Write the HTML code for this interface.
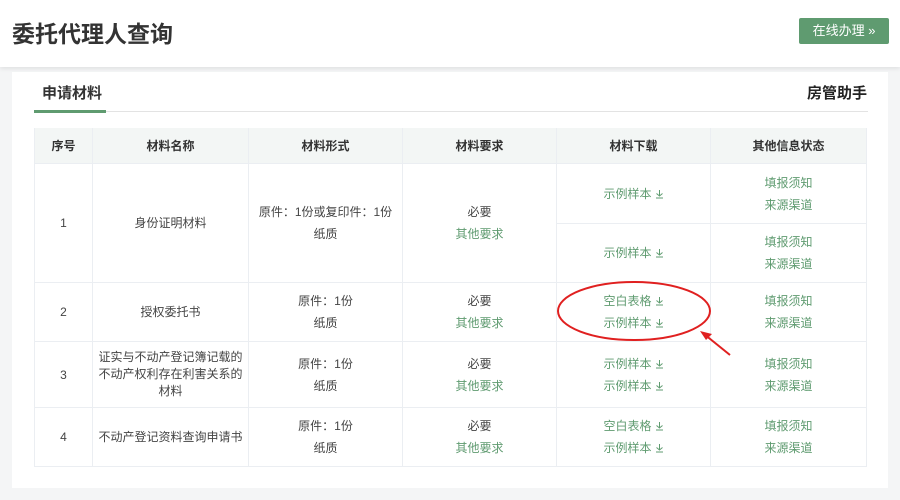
<!DOCTYPE html>
<html><head><meta charset="utf-8"><style>
*{margin:0;padding:0;box-sizing:border-box}
body{width:900px;height:500px;overflow:hidden;background:#f4f5f6;font-family:"Liberation Sans","Noto Sans CJK SC",sans-serif;position:relative;color:#333}
.hdr{position:absolute;left:0;top:0;width:900px;height:67px;background:#fff;box-shadow:0 2px 4px rgba(0,0,0,.08)}
.hdr h1{position:absolute;left:12px;top:15px;font-size:23px;font-weight:bold;color:#333}
.btn{position:absolute;left:799px;top:18px;width:90px;height:26px;background:#5f9b70;color:#fff;font-size:13px;line-height:26px;text-align:center;border-radius:2px}
.card{position:absolute;left:12px;top:72px;width:876px;height:416px;background:#fff}
.tab{position:absolute;left:42px;top:82px;font-size:15px;font-weight:bold;color:#333}
.tab2{position:absolute;left:807px;top:82px;font-size:15px;font-weight:bold;color:#222}
.line{position:absolute;left:34px;top:111px;width:834px;height:1px;background:#e3e3e3}
.uline{position:absolute;left:34px;top:110px;width:72px;height:3px;background:#5f9b70}
.c{position:absolute;border-right:1px solid #ebeef2;border-bottom:1px solid #ebeef2;display:flex;flex-direction:column;justify-content:center;align-items:center;text-align:center;font-size:12px;line-height:22px;color:#444}
.h{background:#f3f6f5;font-weight:bold;color:#333}
.g{color:#5f9b70}
.tbl{position:absolute;left:34px;top:128px;width:833px;height:339px;border-left:1px solid #ebeef2;border-top:1px solid #ebeef2}
.d{display:inline-block;width:9px;height:10px;margin-left:3px;vertical-align:-1px}
</style></head><body>
<svg width="0" height="0" style="position:absolute"><symbol id="dl" viewBox="0 0 9 10"><path d="M4.5 1v6M1.5 4.5l3 2.5 3-2.5M1 9h7" fill="none" stroke="#5f9b70" stroke-width="1"/></symbol></svg>
<div class="hdr"><h1>委托代理人查询</h1><div class="btn">在线办理 »</div></div>
<div class="card"></div>
<div class="tab">申请材料</div><div class="tab2">房管助手</div>
<div class="line"></div><div class="uline"></div>
<div class="tbl"></div>
<div class="c h" style="left:35px;top:128px;width:58px;height:36px">序号</div>
<div class="c h" style="left:93px;top:128px;width:156px;height:36px">材料名称</div>
<div class="c h" style="left:249px;top:128px;width:154px;height:36px">材料形式</div>
<div class="c h" style="left:403px;top:128px;width:154px;height:36px">材料要求</div>
<div class="c h" style="left:557px;top:128px;width:154px;height:36px">材料下载</div>
<div class="c h" style="left:711px;top:128px;width:156px;height:36px">其他信息状态</div>
<div class="c" style="left:35px;top:164px;width:58px;height:119px">1</div>
<div class="c" style="left:93px;top:164px;width:156px;height:119px">身份证明材料</div>
<div class="c" style="left:249px;top:164px;width:154px;height:119px"><div>原件：1份或复印件：1份</div><div>纸质</div></div>
<div class="c" style="left:403px;top:164px;width:154px;height:119px"><div>必要</div><div class="g">其他要求</div></div>
<div class="c g" style="left:557px;top:164px;width:154px;height:60px"><div>示例样本<svg class="d"><use href="#dl"/></svg></div></div>
<div class="c g" style="left:711px;top:164px;width:156px;height:60px"><div>填报须知</div><div>来源渠道</div></div>
<div class="c g" style="left:557px;top:224px;width:154px;height:59px"><div>示例样本<svg class="d"><use href="#dl"/></svg></div></div>
<div class="c g" style="left:711px;top:224px;width:156px;height:59px"><div>填报须知</div><div>来源渠道</div></div>
<div class="c" style="left:35px;top:283px;width:58px;height:59px">2</div>
<div class="c" style="left:93px;top:283px;width:156px;height:59px">授权委托书</div>
<div class="c" style="left:249px;top:283px;width:154px;height:59px"><div>原件：1份</div><div>纸质</div></div>
<div class="c" style="left:403px;top:283px;width:154px;height:59px"><div>必要</div><div class="g">其他要求</div></div>
<div class="c g" style="left:557px;top:283px;width:154px;height:59px"><div>空白表格<svg class="d"><use href="#dl"/></svg></div><div>示例样本<svg class="d"><use href="#dl"/></svg></div></div>
<div class="c g" style="left:711px;top:283px;width:156px;height:59px"><div>填报须知</div><div>来源渠道</div></div>
<div class="c" style="left:35px;top:342px;width:58px;height:66px">3</div>
<div class="c" style="left:93px;top:342px;width:156px;height:66px;line-height:17px">证实与不动产登记簿记载的<br>不动产权利存在利害关系的<br>材料</div>
<div class="c" style="left:249px;top:342px;width:154px;height:66px"><div>原件：1份</div><div>纸质</div></div>
<div class="c" style="left:403px;top:342px;width:154px;height:66px"><div>必要</div><div class="g">其他要求</div></div>
<div class="c g" style="left:557px;top:342px;width:154px;height:66px"><div>示例样本<svg class="d"><use href="#dl"/></svg></div><div>示例样本<svg class="d"><use href="#dl"/></svg></div></div>
<div class="c g" style="left:711px;top:342px;width:156px;height:66px"><div>填报须知</div><div>来源渠道</div></div>
<div class="c" style="left:35px;top:408px;width:58px;height:59px">4</div>
<div class="c" style="left:93px;top:408px;width:156px;height:59px">不动产登记资料查询申请书</div>
<div class="c" style="left:249px;top:408px;width:154px;height:59px"><div>原件：1份</div><div>纸质</div></div>
<div class="c" style="left:403px;top:408px;width:154px;height:59px"><div>必要</div><div class="g">其他要求</div></div>
<div class="c g" style="left:557px;top:408px;width:154px;height:59px"><div>空白表格<svg class="d"><use href="#dl"/></svg></div><div>示例样本<svg class="d"><use href="#dl"/></svg></div></div>
<div class="c g" style="left:711px;top:408px;width:156px;height:59px"><div>填报须知</div><div>来源渠道</div></div>
<svg style="position:absolute;left:0;top:0" width="900" height="500">
<ellipse cx="634" cy="311" rx="76" ry="29" fill="none" stroke="#e02020" stroke-width="2"/>
<line x1="730" y1="355" x2="704" y2="334" stroke="#e02020" stroke-width="2"/>
<polygon points="700,331 712,334 706,340" fill="#e02020"/>
</svg>
</body></html>
